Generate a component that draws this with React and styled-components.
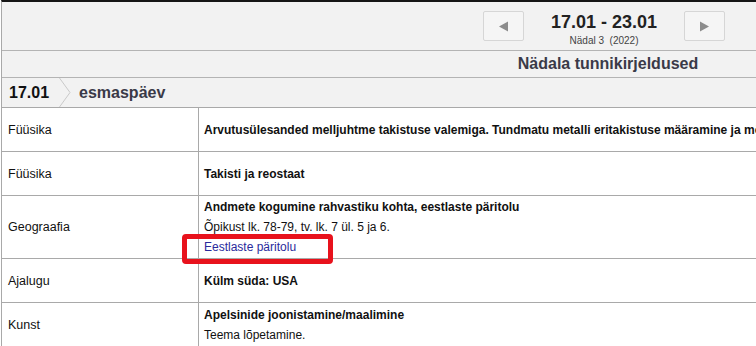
import React from 'react';
import styled, { createGlobalStyle } from 'styled-components';

const GlobalStyle = createGlobalStyle`
    html, body {
        margin: 0;
        padding: 0;
        background: #ffffff;
        overflow: hidden;
    }
    body {
        font-family: "Liberation Sans", Arial, sans-serif;
        font-size: 12px;
        color: #222;
    }
`;

const Page = styled.div`
    width: 1204px;
    margin-left: 1px;
    border-top: 2px solid #161616;
    border-left: 1px solid #a9a9a9;
    background: #f2f2f2;
`;

const WeekHeader = styled.div`
    height: 49px;
    box-sizing: border-box;
    border-bottom: 1px solid #b4b4b4;
    display: flex;
    justify-content: center;
    align-items: flex-start;
    padding-top: 9px;
`;

const NavButton = styled.button`
    width: 41px;
    height: 30px;
    padding: 0;
    border: 1px solid #d6d6d6;
    border-radius: 2px;
    background: #f5f5f5;
    display: flex;
    align-items: center;
    justify-content: center;
    cursor: pointer;
`;

const WeekInfo = styled.div`
    width: 160px;
    text-align: center;
`;

const WeekRange = styled.div`
    font-size: 18px;
    font-weight: 700;
    line-height: 22px;
    color: #222;
`;

const WeekNumber = styled.div`
    font-size: 10px;
    line-height: 12px;
    margin-top: 2px;
    color: #444;
    white-space: pre;
`;

const SectionTitle = styled.div`
    height: 26px;
    line-height: 26px;
    border-bottom: 1px solid #b4b4b4;
    text-align: center;
    padding-left: 8px;
    font-size: 16px;
    font-weight: 700;
    color: #3a3a48;
`;

const DayBar = styled.div`
    height: 29px;
    border-bottom: 1px solid #a9a9a9;
    display: flex;
    align-items: stretch;
`;

const DayDate = styled.div`
    padding: 0 10px 0 7px;
    display: flex;
    align-items: center;
    font-size: 16px;
    font-weight: 700;
    color: #111;
`;

const DayName = styled.div`
    padding-left: 8px;
    display: flex;
    align-items: center;
    font-size: 16px;
    font-weight: 700;
    color: #3a3a48;
`;

const Lessons = styled.div`
    background: #ffffff;
`;

const LessonRow = styled.div`
    display: grid;
    grid-template-columns: 197px 1fr;
    border-bottom: 1px solid #a9a9a9;
`;

const Subject = styled.div`
    min-height: 43px;
    box-sizing: border-box;
    padding: 1px 6px;
    border-right: 1px solid #a9a9a9;
    display: flex;
    align-items: center;
    line-height: 20px;
    font-size: 12.5px;
    color: #111;
`;

const Topic = styled.div`
    min-height: 43px;
    box-sizing: border-box;
    padding: 1px 5px;
    display: flex;
    flex-direction: column;
    justify-content: center;
    line-height: 20px;
    white-space: nowrap;
`;

const TopicLine = styled.div`
    font-weight: ${p => (p.$bold ? 700 : 400)};
    color: #111;
`;

const Material = styled.a`
    position: relative;
    display: inline-block;
    line-height: 20px;
    color: #2a2a9c;
    text-decoration: none;
`;

// punane raam lingi ümber
const Marker = styled.span`
    position: absolute;
    left: -22px;
    top: -3px;
    width: 151px;
    height: 30px;
    box-sizing: border-box;
    border: 5px solid #e8121c;
    border-radius: 4px;
    z-index: 2;
    pointer-events: none;
`;

const Arrow = ({ dir }) => (
    <svg width="11" height="11" viewBox="0 0 11 11">
        {dir === 'left'
            ? <polygon points="10,0.5 10,10.5 1,5.5" fill="#8c8c8c" />
            : <polygon points="1,0.5 1,10.5 10,5.5" fill="#8c8c8c" />}
    </svg>
);

const Crumb = () => (
    <svg width="12" height="29" viewBox="0 0 12 29">
        <polyline points="0.5,0 11,14.5 0.5,29" fill="none" stroke="#c9c9c9" strokeWidth="1" />
    </svg>
);

const lessons = [
    { subject: 'Füüsika', lines: [{ text: 'Arvutusülesanded melljuhtme takistuse valemiga. Tundmatu metalli eritakistuse määramine ja mõõtemääramatuse hindamine.', bold: true }] },
    { subject: 'Füüsika', lines: [{ text: 'Takisti ja reostaat', bold: true }] },
    {
        subject: 'Geograafia',
        lines: [
            { text: 'Andmete kogumine rahvastiku kohta, eestlaste päritolu', bold: true },
            { text: 'Õpikust lk. 78-79, tv. lk. 7 ül. 5 ja 6.' },
        ],
        material: 'Eestlaste päritolu',
    },
    { subject: 'Ajalugu', lines: [{ text: 'Külm süda: USA', bold: true }] },
    {
        subject: 'Kunst',
        lines: [
            { text: 'Apelsinide joonistamine/maalimine', bold: true },
            { text: 'Teema lõpetamine.' },
        ],
    },
];

const App = () => {
    return (
        <>
            <GlobalStyle />
            <Page>
                <WeekHeader>
                    <NavButton aria-label="Eelmine nädal"><Arrow dir="left" /></NavButton>
                    <WeekInfo>
                        <WeekRange>17.01 - 23.01</WeekRange>
                        <WeekNumber>Nädal 3  (2022)</WeekNumber>
                    </WeekInfo>
                    <NavButton aria-label="Järgmine nädal"><Arrow dir="right" /></NavButton>
                </WeekHeader>
                <SectionTitle>Nädala tunnikirjeldused</SectionTitle>
                <DayBar>
                    <DayDate>17.01</DayDate>
                    <Crumb />
                    <DayName>esmaspäev</DayName>
                </DayBar>
                <Lessons>
                    {lessons.map((l, i) => (
                        <LessonRow key={i}>
                            <Subject>{l.subject}</Subject>
                            <Topic>
                                {l.lines.map((line, j) => (
                                    <TopicLine key={j} $bold={line.bold}>{line.text}</TopicLine>
                                ))}
                                {l.material && (
                                    <div>
                                        <Material href="#">
                                            {l.material}
                                            <Marker />
                                        </Material>
                                    </div>
                                )}
                            </Topic>
                        </LessonRow>
                    ))}
                </Lessons>
            </Page>
        </>
    );
};

export default App;
